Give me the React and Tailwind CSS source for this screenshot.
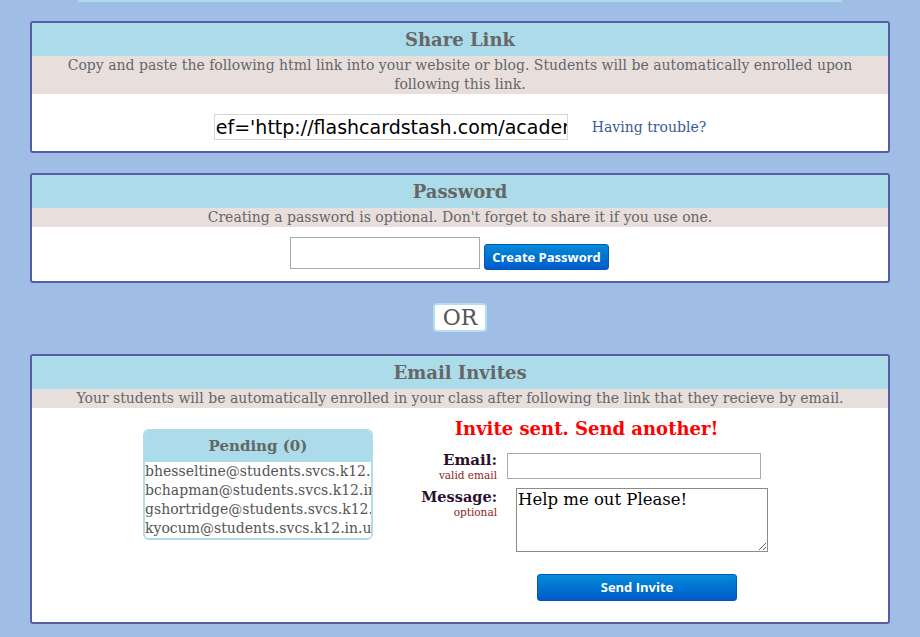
import React from "react";

const serif = "font-['DejaVu_Serif',serif]";

function Panel({ title, children, desc, descClass = "" }) {
  return (
    <div className="rounded-[3px] border-2 border-[#5a5ca3] bg-white overflow-hidden">
      <div className="h-[33px] bg-[#acdcea] flex items-center justify-center text-[18px] font-bold text-[#666] leading-none">
        {title}
      </div>
      <div className={"bg-[#e8dfdd] text-center text-[14px] leading-[19px] text-[#666] " + descClass}>
        {desc}
      </div>
      {children}
    </div>
  );
}

function BlueButton({ children, className = "" }) {
  return (
    <button
      className={
        "rounded-[3px] border border-[#0058b8] bg-gradient-to-b from-[#0a8ad8] to-[#005bcb] text-white font-bold text-[13px] font-['Open_Sans',sans-serif] leading-none flex items-center justify-center " +
        className
      }
    >
      {children}
    </button>
  );
}

export default function App() {
  const emails = [
    "bhesseltine@students.svcs.k12.in.us",
    "bchapman@students.svcs.k12.in.us",
    "gshortridge@students.svcs.k12.in.us",
    "kyocum@students.svcs.k12.in.us",
  ];
  return (
    <div className={"min-h-screen w-full bg-[#a0bde6] " + serif}>
      <div className="mx-[78px] h-[2px] bg-[#acdcea]" />
      <div className="pl-[30px] pr-[30px] pt-[19px] pb-[14px] flex flex-col">
        {/* Share Link */}
        <Panel
          title="Share Link"
          desc={
            <>
              Copy and paste the following html link into your website or blog. Students will be automatically enrolled upon
              <br />
              following this link.
            </>
          }
        >
          <div className="h-[57px] pt-[20px] flex items-start justify-center gap-[24px]">
            <div className="w-[354px] h-[26px] border border-[#d6d6d6] overflow-hidden whitespace-nowrap text-[19px] leading-[24px] text-black font-['DejaVu_Sans',sans-serif] pl-[1px]">
              ef='http://flashcardstash.com/academy
            </div>
            <a className="text-[14px] leading-[26px] text-[#3a5a9c]">Having trouble?</a>
          </div>
        </Panel>

        {/* Password */}
        <div className="mt-[20px]">
          <Panel title="Password" desc="Creating a password is optional. Don't forget to share it if you use one.">
            <div className="h-[54px] pt-[10px] pr-[21px] flex items-start justify-center gap-[4px]">
              <div className="w-[190px] h-[32px] border border-[#a9a9a9] bg-white" />
              <BlueButton className="mt-[7px] w-[125px] h-[26px]">Create Password</BlueButton>
            </div>
          </Panel>
        </div>

        {/* OR */}
        <div className="flex justify-center mt-[20px]">
          <div className="w-[54px] h-[29px] rounded-[4px] border-2 border-[#b4e0ee] bg-white flex items-center justify-center text-[22px] text-[#555] leading-none">
            OR
          </div>
        </div>

        {/* Email Invites */}
        <div className="mt-[22px]">
          <Panel
            title="Email Invites"
            desc="Your students will be automatically enrolled in your class after following the link that they recieve by email."
            descClass="leading-[18px]"
          >
            <div className="h-[214px] flex items-start">
              <div className="ml-[111px] mt-[21px] w-[230px] rounded-[6px] border-2 border-[#b0dcea] overflow-hidden">
                <div className="h-[31px] bg-[#acdcea] flex items-center justify-center text-[15px] font-bold text-[#666]">
                  Pending (0)
                </div>
                <div className="bg-white">
                  {emails.map((e) => (
                    <div key={e} className="whitespace-nowrap overflow-hidden text-[14px] leading-[19px] text-[#555]">
                      {e}
                    </div>
                  ))}
                </div>
              </div>

              <div className="ml-[27px] w-[373px] flex flex-col">
                <div className="mt-[9px] text-center text-[18px] leading-[24px] font-bold text-[#ff0000]">
                  Invite sent. Send another!
                </div>
                <div className="mt-[12px] flex items-start">
                  <div className="w-[97px] text-right">
                    <div className="text-[15px] leading-[15px] font-bold text-[#2b102e]">Email:</div>
                    <div className="text-[10.5px] leading-[14px] text-[#8b2525]">valid email</div>
                  </div>
                  <div className="ml-[10px] w-[254px] h-[26px] border border-[#a9a9a9] bg-white" />
                </div>
                <div className="mt-[6px] flex items-start">
                  <div className="w-[97px] text-right pt-[1px]">
                    <div className="text-[14.5px] leading-[16px] font-bold text-[#2b102e]">Message:</div>
                    <div className="text-[10.5px] leading-[14px] text-[#8b2525]">optional</div>
                  </div>
                  <textarea
                    readOnly
                    defaultValue="Help me out Please!"
                    className={"ml-[19px] w-[252px] h-[64px] border border-[#8a8a8a] bg-white text-[16.5px] leading-[20px] text-black px-[1px] py-[1px] outline-none resize " + serif}
                  />
                </div>
                <BlueButton className="ml-[137px] mt-[22px] w-[200px] h-[27px]">Send Invite</BlueButton>
              </div>
            </div>
          </Panel>
        </div>
      </div>
    </div>
  );
}
